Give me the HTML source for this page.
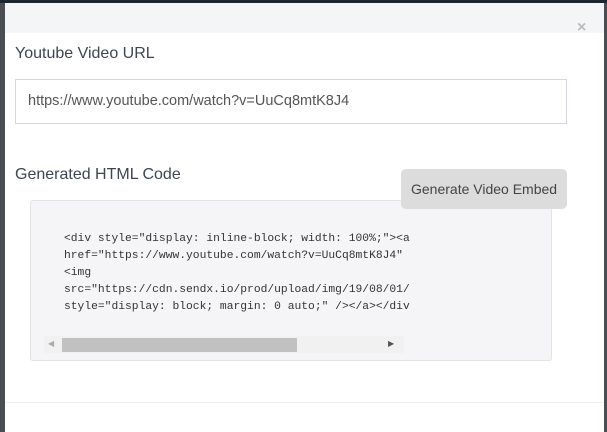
<!DOCTYPE html>
<html><head><style>
*{margin:0;padding:0;box-sizing:border-box}
body{width:607px;height:432px;overflow:hidden;background:#4a4d52;font-family:"Liberation Sans",sans-serif;position:relative}
.top{position:absolute;left:0;top:0;width:607px;height:3px;background:#1c2530}
.modal{position:absolute;left:5px;top:3px;width:599px;height:429px;background:#fff}
.hdr{position:absolute;left:0;top:0;width:599px;height:30px;background:#f4f5f7}
.x{position:absolute;left:572px;top:16px;font-size:16px;color:#bbb;font-weight:bold}
.t{position:absolute;color:#3f4651;font-size:16px}
.inp{position:absolute;left:10px;top:76px;width:552px;height:45px;border:1px solid #d3d6dc;font-size:14.5px;color:#555;padding:13px 0 0 12px}
.btn{position:absolute;left:396px;top:166px;width:166px;height:40px;background:#dcdcdc;border-radius:5px;color:#444;font-size:14px;padding:12px 0 0 10px}
.code{position:absolute;left:25px;top:197px;width:522px;height:161px;background:#f5f5f7;border:1px solid #e2e3e6;border-radius:3px}
pre{position:absolute;left:33px;top:30px;font-family:"Liberation Mono",monospace;font-size:11.3px;line-height:17px;color:#333}
.sb{position:absolute;left:13px;top:135px;width:360px;height:17px;background:#f1f1f1}
.th{position:absolute;left:18px;top:2px;width:235px;height:14px;background:#c1c1c1}
.foot{position:absolute;left:0;top:399px;width:599px;height:1px;background:#eceef0}
</style></head><body>
<div class="top"></div>
<div class="modal">
<div class="hdr"></div>
<div class="x">×</div>
<div class="t" style="left:10px;top:42px">Youtube Video URL</div>
<div class="inp">https://www.youtube.com/watch?v=UuCq8mtK8J4</div>
<div class="t" style="left:10px;top:163px">Generated HTML Code</div>
<div class="code"><pre>&lt;div style="display: inline-block; width: 100%;"&gt;&lt;a
href="https://www.youtube.com/watch?v=UuCq8mtK8J4"
&lt;img
src="https://cdn.sendx.io/prod/upload/img/19/08/01/
style="display: block; margin: 0 auto;" /&gt;&lt;/a&gt;&lt;/div</pre>
<div class="sb"><span style="position:absolute;left:4px;top:3px;font-size:8px;color:#aaa">◀</span><div class="th"></div><span style="position:absolute;left:344px;top:3px;font-size:8px;color:#555">▶</span></div>
</div>
<div class="btn">Generate Video Embed</div>
<div class="foot"></div>
</div>
</body></html>
